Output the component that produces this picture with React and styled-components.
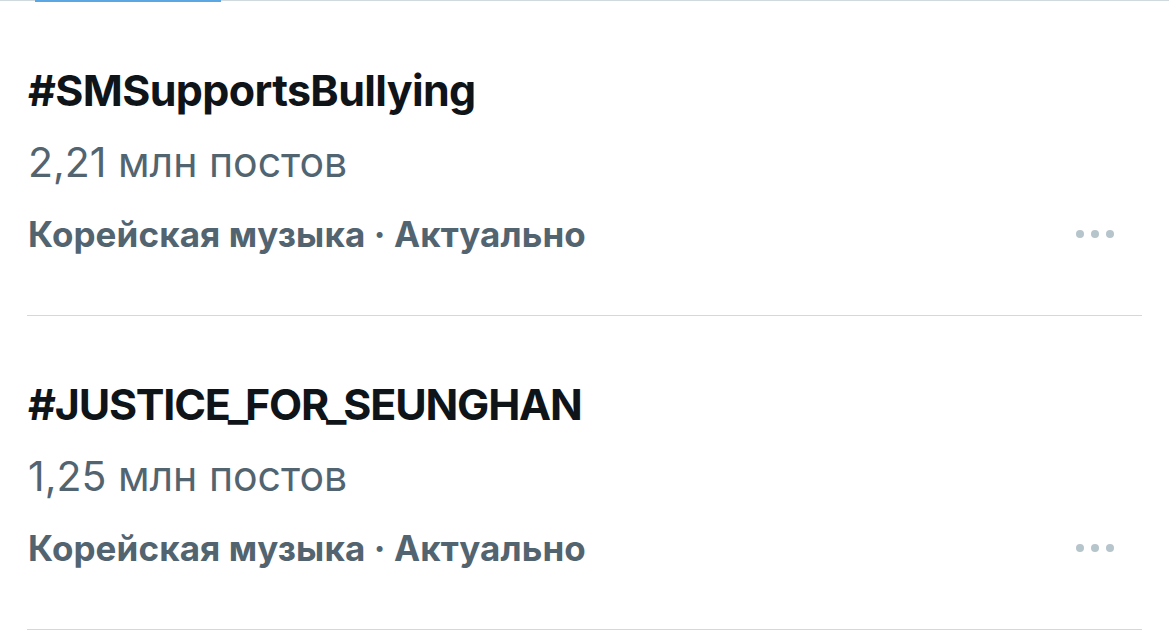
import React from 'react'
import styled, { createGlobalStyle } from 'styled-components';

const GlobalStyle = createGlobalStyle`
    body {
        margin: 0;
        background: #ffffff;
        font-family: Inter, 'Noto Sans', sans-serif;
    }
`;

const TabLine = styled.div`
    display: flex;
    height: 2px;
    border-top: 1px solid #cfd9de;
    box-sizing: border-box;
`;

const TabIndicator = styled.div`
    margin-left: 35px;
    width: 186px;
    height: 2px;
    margin-top: -1px;
    background: #5aa7e3;
`;

const List = styled.div`
    display: flex;
    flex-direction: column;
    margin: 0 27px 0 27px;
`;

const Trend = styled.div`
    display: flex;
    flex-direction: column;
    padding: 52px 28px 45px 1px;
    border-bottom: 1px solid #cfd9de;
`;

const Title = styled.div`
    color: #0f1419;
    font-size: 43px;
    font-weight: 700;
    line-height: 72px;
    letter-spacing: ${props => props.caps ? '-1.2px' : '-0.65px'};
`;

const Underscore = styled.span`
    margin: 0 -2px;
`;

const Count = styled.div`
    color: #536471;
    font-size: 41px;
    font-weight: 400;
    line-height: 72px;
`;

const MetaRow = styled.div`
    display: flex;
    align-items: center;
    justify-content: space-between;
    height: 72px;
`;

const Meta = styled.span`
    color: #536471;
    font-size: 35px;
    font-weight: 700;
    letter-spacing: 0.1px;
`;

const Dots = styled.div`
    display: flex;
    gap: 7px;
`;

const Dot = styled.span`
    width: 8px;
    height: 8px;
    border-radius: 50%;
    background: #b6c4cc;
`;

const trends = [
    { tag: '#SMSupportsBullying', count: '2,21 млн постов' },
    { tag: '#JUSTICE_FOR_SEUNGHAN', count: '1,25 млн постов' },
];

function renderTag(tag) {
    const parts = tag.split('_');
    return parts.map((p, i) => (
        <React.Fragment key={i}>
            {i > 0 && <Underscore>_</Underscore>}
            {p}
        </React.Fragment>
    ));
}

function App() {
    return (
        <div>
            <GlobalStyle />
            <TabLine>
                <TabIndicator />
            </TabLine>
            <List>
                {trends.map((t) => (
                    <Trend key={t.tag}>
                        <Title caps={t.tag === t.tag.toUpperCase()}>{renderTag(t.tag)}</Title>
                        <Count>{t.count}</Count>
                        <MetaRow>
                            <Meta>Корейская музыка · Актуально</Meta>
                            <Dots>
                                <Dot />
                                <Dot />
                                <Dot />
                            </Dots>
                        </MetaRow>
                    </Trend>
                ))}
            </List>
        </div>
    )
}
export default App;
